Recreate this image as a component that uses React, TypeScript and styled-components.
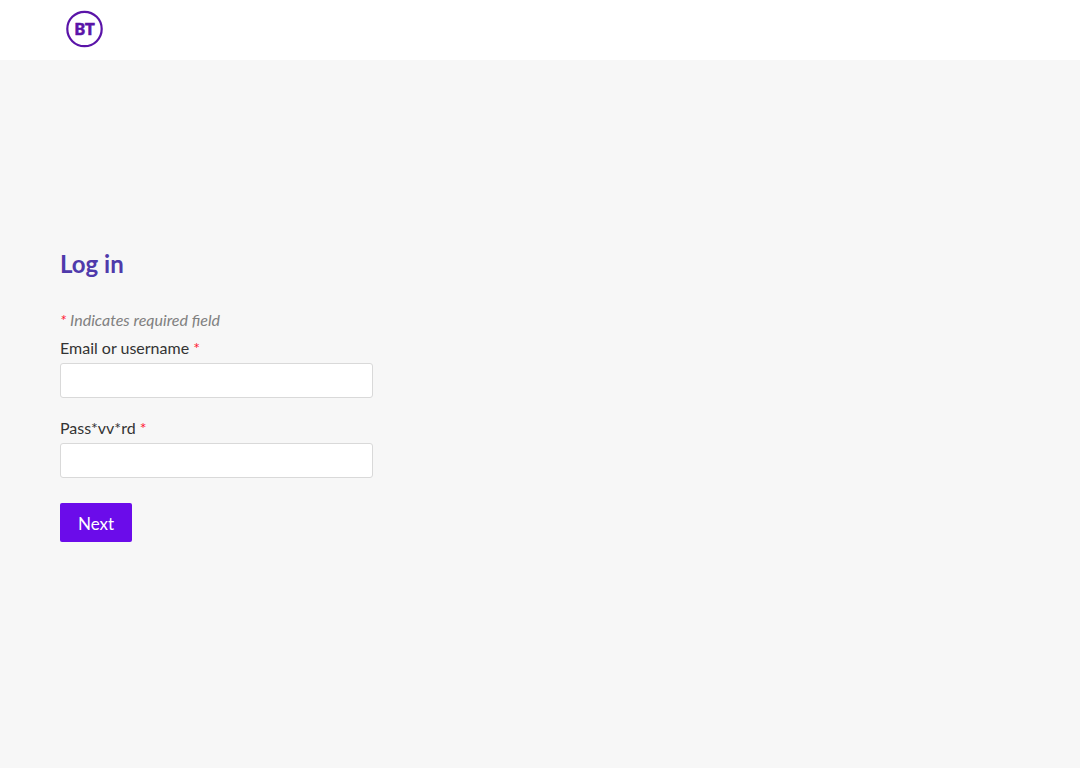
import React from "react";
import styled, { createGlobalStyle } from "styled-components";

const GlobalStyle = createGlobalStyle`
  *, *::before, *::after {
    box-sizing: border-box;
  }
  body {
    margin: 0;
    background: #f7f7f7;
    color: #333333;
    font-family: Lato, "Liberation Sans", sans-serif;
    font-size: 16px;
    line-height: 20px;
  }
`;

const Page = styled.div`
  display: flex;
  flex-direction: column;
  min-height: 100vh;
`;

const Header = styled.header`
  display: flex;
  height: 60px;
  padding: 10px 66px;
  background: #ffffff;
`;

const Logo = styled.svg`
  display: block;
  width: 37px;
  height: 38px;
`;

const Main = styled.main`
  padding: 188px 60px 60px;
`;

const Title = styled.h1`
  margin: 0;
  color: #4f3aab;
  font-size: 24px;
  font-weight: 700;
  line-height: 32px;
`;

const Form = styled.form`
  display: flex;
  flex-direction: column;
  align-items: flex-start;
  margin-top: 30px;
`;

const Hint = styled.p`
  margin: 0 0 8px;
  color: #808080;
  font-style: italic;
`;

const Required = styled.span`
  color: #ff1a35;
`;

const Field = styled.div`
  display: flex;
  flex-direction: column;
  gap: 5px;
  width: 100%;
  max-width: 313px;
  margin-bottom: 20px;
`;

const Label = styled.label`
  color: #333333;
`;

const Input = styled.input`
  width: 100%;
  height: 35px;
  padding: 0 10px;
  border: 1px solid #d9d9d9;
  border-radius: 3px;
  background: #ffffff;
  color: #333333;
  font: inherit;
`;

const Button = styled.button`
  height: 39px;
  margin-top: 5px;
  padding: 2px 18px 0;
  border: 0;
  border-radius: 2px;
  background: #6b0cea;
  color: #ffffff;
  font-family: inherit;
  font-size: 17px;
  cursor: pointer;
`;

export default function App() {
  return (
    <>
      <GlobalStyle />
      <Page>
        <Header>
          <Logo viewBox="0 0 37 38" role="img" aria-label="BT">
            <circle cx="18.5" cy="19" r="17.2" fill="none" stroke="#5a14a8" strokeWidth="2.2" />
            <text
              x="18.5"
              y="25"
              textAnchor="middle"
              fill="#5a14a8"
              stroke="#5a14a8"
              strokeWidth="0.6"
              fontFamily="Lato, sans-serif"
              fontSize="16"
              fontWeight="900"
            >
              BT
            </text>
          </Logo>
        </Header>
        <Main>
          <Title>Log in</Title>
          <Form>
            <Hint>
              <Required>*</Required> Indicates required field
            </Hint>
            <Field>
              <Label htmlFor="username">
                Email or username <Required>*</Required>
              </Label>
              <Input id="username" type="text" autoComplete="off" />
            </Field>
            <Field>
              <Label htmlFor="secret">
                Pass*vv*rd <Required>*</Required>
              </Label>
              <Input id="secret" type="password" autoComplete="off" />
            </Field>
            <Button type="button">Next</Button>
          </Form>
        </Main>
      </Page>
    </>
  );
}
